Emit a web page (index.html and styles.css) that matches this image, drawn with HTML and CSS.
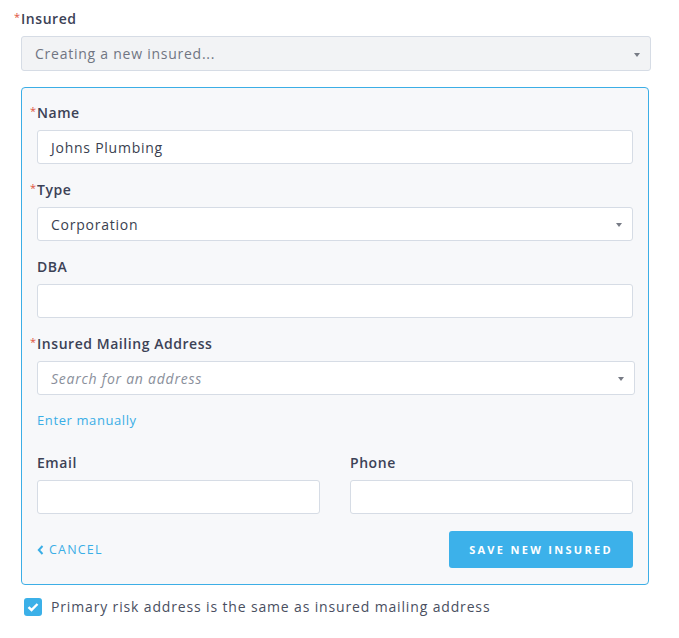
FILE: index.html
```html
<!DOCTYPE html>
<html>
<head>
<meta charset="utf-8">
<link rel="stylesheet" href="styles.css">
</head>
<body>
<div class="form">
  <div class="label top-label"><span class="req">*</span>Insured</div>
  <div class="select disabled">
    <span>Creating a new insured...</span>
    <span class="caret"></span>
  </div>

  <div class="panel">
    <div class="group">
      <div class="label"><span class="req">*</span>Name</div>
      <div class="input">Johns Plumbing</div>
    </div>
    <div class="group">
      <div class="label"><span class="req">*</span>Type</div>
      <div class="select">
        <span>Corporation</span>
        <span class="caret"></span>
      </div>
    </div>
    <div class="group">
      <div class="label">DBA</div>
      <div class="input"></div>
    </div>
    <div class="group">
      <div class="label"><span class="req">*</span>Insured Mailing Address</div>
      <div class="select wide">
        <span class="placeholder">Search for an address</span>
        <span class="caret"></span>
      </div>
    </div>
    <a class="link">Enter manually</a>
    <div class="row">
      <div class="group col">
        <div class="label">Email</div>
        <div class="input"></div>
      </div>
      <div class="group col">
        <div class="label">Phone</div>
        <div class="input"></div>
      </div>
    </div>
    <div class="actions">
      <a class="cancel"><svg width="7" height="10" viewBox="0 0 7 10"><path d="M5.5 1 L1.8 5 L5.5 9" fill="none" stroke="currentColor" stroke-width="2"/></svg>CANCEL</a>
      <button class="save">SAVE NEW INSURED</button>
    </div>
  </div>

  <div class="check-row">
    <span class="checkbox"><svg width="12" height="10" viewBox="0 0 12 10"><path d="M1.5 5.2 L4.5 8 L10.5 2" fill="none" stroke="#fff" stroke-width="2.4"/></svg></span>
    <span class="check-text">Primary risk address is the same as insured mailing address</span>
  </div>
</div>
</body>
</html>
```

FILE: styles.css
```css
* { box-sizing: border-box; }
body {
  margin: 0;
  background: #fff;
  font-family: "Open Sans", "Liberation Sans", sans-serif;
  font-size: 14px;
  color: #3a3f50;
  letter-spacing: 0.75px;
}
.form {
  width: 630px;
  margin-left: 21px;
  padding-top: 10px;
}
.label {
  font-weight: 600;
  font-size: 14px;
  line-height: 17px;
  color: #3c4256;
  margin-bottom: 9px;
  letter-spacing: 0.55px;
}
.top-label { margin-bottom: 9px; }
.req {
  color: #e0533d;
  font-size: 11px;
  line-height: 0;
  font-weight: 400;
  display: inline-block;
  width: 7px;
  margin-left: -7px;
  vertical-align: 3px;
}
.select, .input {
  height: 34px;
  border: 1px solid #d6dce5;
  border-radius: 3px;
  background: #fff;
  display: flex;
  align-items: center;
  padding: 0 13px;
  font-size: 14px;
  color: #3a3f50;
}
.select { justify-content: space-between; }
.select.disabled {
  height: 35px;
  background: #f2f3f5;
  color: #707582;
}
.select.wide { width: calc(100% + 2px); }
.placeholder { font-style: italic; color: #8a8f9b; }
.caret {
  width: 0; height: 0;
  border-left: 3.5px solid transparent;
  border-right: 3.5px solid transparent;
  border-top: 4px solid #777b85;
  margin-right: -3px;
  margin-top: 2px;
}
.panel {
  width: 628px;
  margin-top: 16px;
  border: 1px solid #3caee6;
  border-radius: 4px;
  background: #f7f8fa;
  padding: 16px 15px 16px 15px;
}
.group { margin-bottom: 17px; }
.link {
  display: block;
  color: #3aaee6;
  font-size: 13px;
  line-height: 16px;
  margin-bottom: 26px;
  letter-spacing: 0.6px;
}
.row {
  display: flex;
  gap: 30px;
}
.row .col { flex: 1; margin-bottom: 17px; }
.actions {
  display: flex;
  justify-content: space-between;
  align-items: center;
}
.cancel {
  color: #3aaee6;
  font-size: 12.5px;
  letter-spacing: 1.2px;
  display: flex;
  align-items: center;
  gap: 5px;
}
.save {
  width: 184px;
  height: 37px;
  border: none;
  border-radius: 3px;
  background: #3cb1ea;
  color: #fff;
  font-family: inherit;
  font-weight: 700;
  font-size: 11px;
  letter-spacing: 2.3px;
}
.check-row {
  display: flex;
  align-items: center;
  margin-top: 12px;
  margin-left: 3px;
  gap: 9px;
}
.checkbox {
  width: 18px;
  height: 18px;
  border-radius: 3px;
  background: #3bb0e8;
  display: flex;
  align-items: center;
  justify-content: center;
}
.check-text { color: #4a4f5f; font-size: 14px; letter-spacing: 0.85px; }
```
